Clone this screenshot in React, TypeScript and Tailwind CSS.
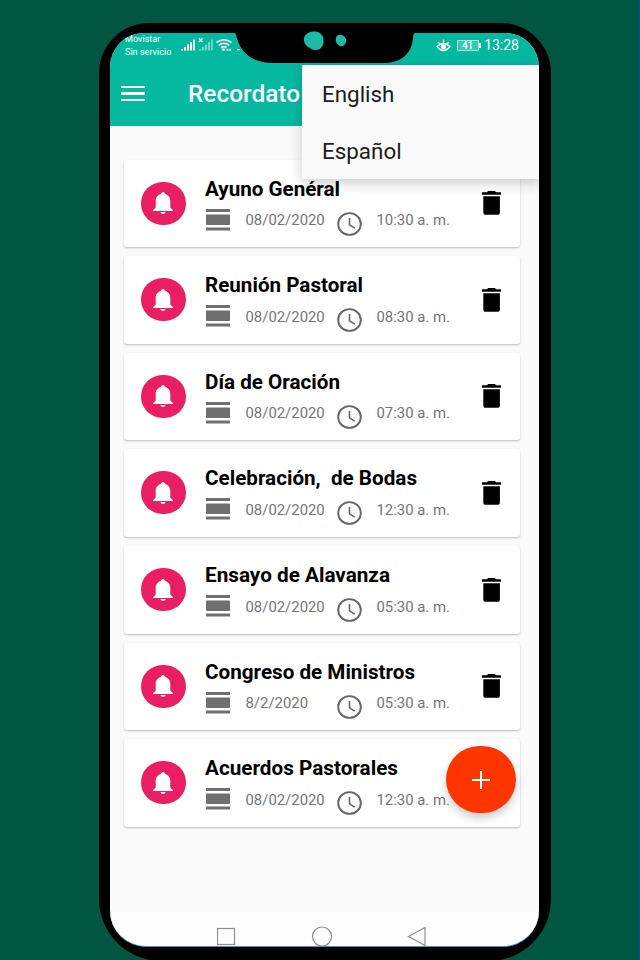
import type { ReactNode } from 'react';

const reminders = [
  { id: 1, title: 'Ayuno Genéral', date: '08/02/2020', time: '10:30 a. m.', titleWidth: 135 },
  { id: 2, title: 'Reunión Pastoral', date: '08/02/2020', time: '08:30 a. m.', titleWidth: 158 },
  { id: 3, title: 'Día de Oración', date: '08/02/2020', time: '07:30 a. m.', titleWidth: 135 },
  { id: 4, title: 'Celebración,  de Bodas', date: '08/02/2020', time: '12:30 a. m.', titleWidth: 212 },
  { id: 5, title: 'Ensayo de Alavanza', date: '08/02/2020', time: '05:30 a. m.', titleWidth: 185 },
  { id: 6, title: 'Congreso de Ministros', date: '8/2/2020', time: '05:30 a. m.', titleWidth: 210 },
  { id: 7, title: 'Acuerdos Pastorales', date: '08/02/2020', time: '12:30 a. m.', titleWidth: 193 }
];

function Icon({ box, className, children }: { box: string; className: string; children: ReactNode }) {
  return (
    <svg viewBox={box} preserveAspectRatio="none" fill="currentColor" className={className}>
      {children}
    </svg>
  );
}

function StatusBar() {
  return (
    <div className="flex h-[32px] items-start justify-between pl-[15px] pr-[20px] text-white">
      <div className="flex">
        <div className="w-[55px] whitespace-nowrap text-[9.1px] leading-[12.5px]">
          <div>Movistar</div>
          <div>Sin servicio</div>
        </div>
        <Icon box="0 0 60 14" className="mt-[5px] h-[14px] w-[60px]">
          <path d="M1 11h2v1.500H1zM4 9h2v3.500H4zM7 6.500h2v6H7zM10 4h2v8.500h-2zM13 1.500h1.800v11H13z" />
          <path opacity=".45" d="M19 11h2v1.500h-2zM22 9h2v3.500h-2zM25 6.500h2v6h-2zM28 4h2v8.500h-2zM31 1.500h1.800v11H31z" />
          <path d="M19 .5l3.500 3.500M22.500 .5l-3.500 3.500" stroke="currentColor" strokeWidth="1.500" />
          <path d="M36.500 4.500q7.500-5.500 15 0M38.700 7.300q5.300-4 10.600 0M41 9.800q3-2.200 5.500-.3" fill="none" stroke="currentColor" strokeWidth="1.600" />
          <circle cx="43.500" cy="11.700" r="1.400" />
          <path d="M46.500 10.800h1.800v2h-1.800zM49.300 10.800h1.800v2h-1.800zM57 11h3v1.300h-3z" />
        </Icon>
      </div>
      <div className="mt-[4px] flex items-center">
        <Icon box="0 0 15 13" className="mr-[6px] h-[13px] w-[15px]">
          <path d="M1 7.500q6.500-6 13 0q-6.500 8-13 0zM2 3l2 2M7.500.500v3M13 3l-2 2" fill="none" stroke="currentColor" strokeWidth="1.300" />
          <circle cx="7.500" cy="7.800" r="2.600" />
        </Icon>
        <div className="flex h-[11px] w-[22px] items-center justify-center rounded-[1px] border border-white/60 bg-white/20 text-[10px] font-medium leading-[11px]">41</div>
        <div className="mr-[3.500px] h-[5px] w-[2px] bg-white" />
        <div className="text-[14px] leading-[16px]">13:28</div>
      </div>
    </div>
  );
}

function ReminderCard({ title, date, time, titleWidth }: { title: string; date: string; time: string; titleWidth: number }) {
  return (
    <div className="flex h-[87.5px] shrink-0 items-start rounded-[3px] bg-white pl-[16.500px] pr-[19px] shadow-[0_1px_2px_rgba(0,0,0,0.25)]">
      <div className="mt-[22px] flex h-[43px] w-[45px] shrink-0 items-center justify-center rounded-full bg-[#e91e63] text-white">
        <Icon box="0 0 20 22" className="h-[22px] w-[20px]">
          <path d="M10 0q1.300.2 2.300 1.900C16 3.300 17.300 5.500 17.300 9v6.500l2.700 2.700V19H0v-.8l2.700-2.700V9c0-3.500 1.300-5.700 5-7.100Q8.700.2 10 0zM7.300 20h5.400q-.8 2-2.700 2t-2.700-2z" />
        </Icon>
      </div>
      <div className="ml-[19.500px] mt-[15px] flex-1">
        <svg width="260" height="28" className="block overflow-visible">
          <text x="0" y="20.500" textLength={titleWidth} lengthAdjust="spacingAndGlyphs" className="whitespace-pre fill-black text-[20px] font-bold">{title}</text>
        </svg>
        <div className="mt-[6px] flex items-start pl-px text-[14.900px] leading-[18px] text-[#757575]">
          <Icon box="0 0 24 22" className="h-[22px] w-[24px] text-[#6f6f6f]">
            <path d="M0 0h24v3H0zM0 6.500q0-1 1-1h22q1 0 1 1v8.500q0 1-1 1H1q-1 0-1-1zM0 18.500h24v3H0z" />
          </Icon>
          <div className="ml-[15.500px] mt-[2.500px] w-[91.500px] whitespace-nowrap">{date}</div>
          <Icon box="0 0 25 24" className="mt-[3px] h-[24px] w-[25px] text-[#666666]">
            <path d="M12.500 6v6.800l5.200 3.400" fill="none" stroke="currentColor" strokeWidth="1.600" />
            <ellipse cx="12.500" cy="12" rx="11.300" ry="10.900" fill="none" stroke="currentColor" strokeWidth="1.900" />
          </Icon>
          <div className="ml-[14.500px] mt-[2.500px] whitespace-nowrap">{time}</div>
        </div>
      </div>
      <Icon box="0 0 19 24" className="mt-[31.500px] h-[24px] w-[19px] shrink-0 text-black">
        <path d="M0 1.300h5L6 0h7l1 1.300h5v2.500H0zM1.300 5.200h16.600v16q0 2.600-2.600 2.600H3.900q-2.600 0-2.600-2.600z" />
      </Icon>
    </div>
  );
}

function LanguageMenu() {
  return (
    <div className="absolute left-[192px] top-[32px] flex h-[114px] w-[240px] flex-col bg-[#fafafa] pl-[20px] text-[22.400px] text-[#1c1c1c] shadow-[0_4px_12px_rgba(0,0,0,0.2)]">
      <div className="flex h-[57px] items-center pt-[2px]">English</div>
      <div className="flex h-[57px] items-center pt-[2px]">Español</div>
    </div>
  );
}

export default function App() {
  return (
    <div className="flex h-[960px] w-[640px] justify-between overflow-hidden bg-[#005640] pl-[99px] font-[Roboto,sans-serif]">
      <div className="relative mt-[23px] h-[938px] w-[452px] rounded-t-[50px] rounded-b-[62px] bg-black pl-[11px] pt-[10px]">
        <div className="relative flex h-[914px] w-[429px] flex-col overflow-hidden rounded-t-[34px] rounded-b-[36px] border-b border-[#4a8fc8] bg-[#fafafa]">
          <div className="h-[93px] shrink-0 bg-[#05b9a1]">
            <StatusBar />
            <div className="flex h-[57px] items-center pl-[11px] text-white">
              <div className="flex w-[24px] flex-col gap-[4px]">
                <div className="h-[2.500px] bg-white" />
                <div className="h-[2.500px] bg-white" />
                <div className="h-[2.500px] bg-white" />
              </div>
              <svg width="114" height="30" className="ml-[43px]">
                <text x="0" y="23" textLength="112" lengthAdjust="spacingAndGlyphs" className="fill-white text-[24px] font-medium">Recordato</text>
              </svg>
            </div>
          </div>
          <div className="flex flex-1 flex-col gap-[9.170px] pl-[14px] pr-[19px] pt-[33.500px]">
            {reminders.map((reminder) => (
              <ReminderCard key={reminder.id} {...reminder} />
            ))}
          </div>
          <div className="flex h-[34px] items-center bg-white/60 pl-[107px] pt-[15px]">
            <svg width="212" height="22" fill="none" stroke="#8e8e8e" strokeWidth="1.200">
              <rect x="0.500" y="2.500" width="17" height="16" />
              <circle cx="105" cy="10.500" r="9.500" />
              <path d="M191.500 10.500L208 1.500v18z" />
            </svg>
          </div>
          <LanguageMenu />
          <div className="absolute left-[336px] top-[713px] flex h-[67px] w-[70px] items-center justify-center rounded-full bg-[#ff3500] shadow-[0_5px_8px_rgba(0,0,0,0.2)]">
            <svg width="18" height="18" stroke="#fff" strokeWidth="2">
              <path d="M9 0v18M0 9h18" />
            </svg>
          </div>
        </div>
        {/* notch with the camera and the sensor */}
        <svg width="180" height="35" className="absolute left-[136px] top-[5px]">
          <path d="M0 5h180Q178 5 178 11C176 25 168 35 148 35H38C16 35 5 23 2 10Q1 6 0 5z" fill="#000" />
          <path d="M69 10C71 2 85 1 88 9C90 17 86 23 79 22C74 20 68 17 69 10z" fill="#1bbba5" />
          <path d="M101 10C102 5 109 6 111 11C112 16 108 19 105 18C102 16 100 14 101 10z" fill="#1bbba5" />
        </svg>
      </div>
      <div className="w-[2px] bg-[#07508a]" />
    </div>
  );
}
